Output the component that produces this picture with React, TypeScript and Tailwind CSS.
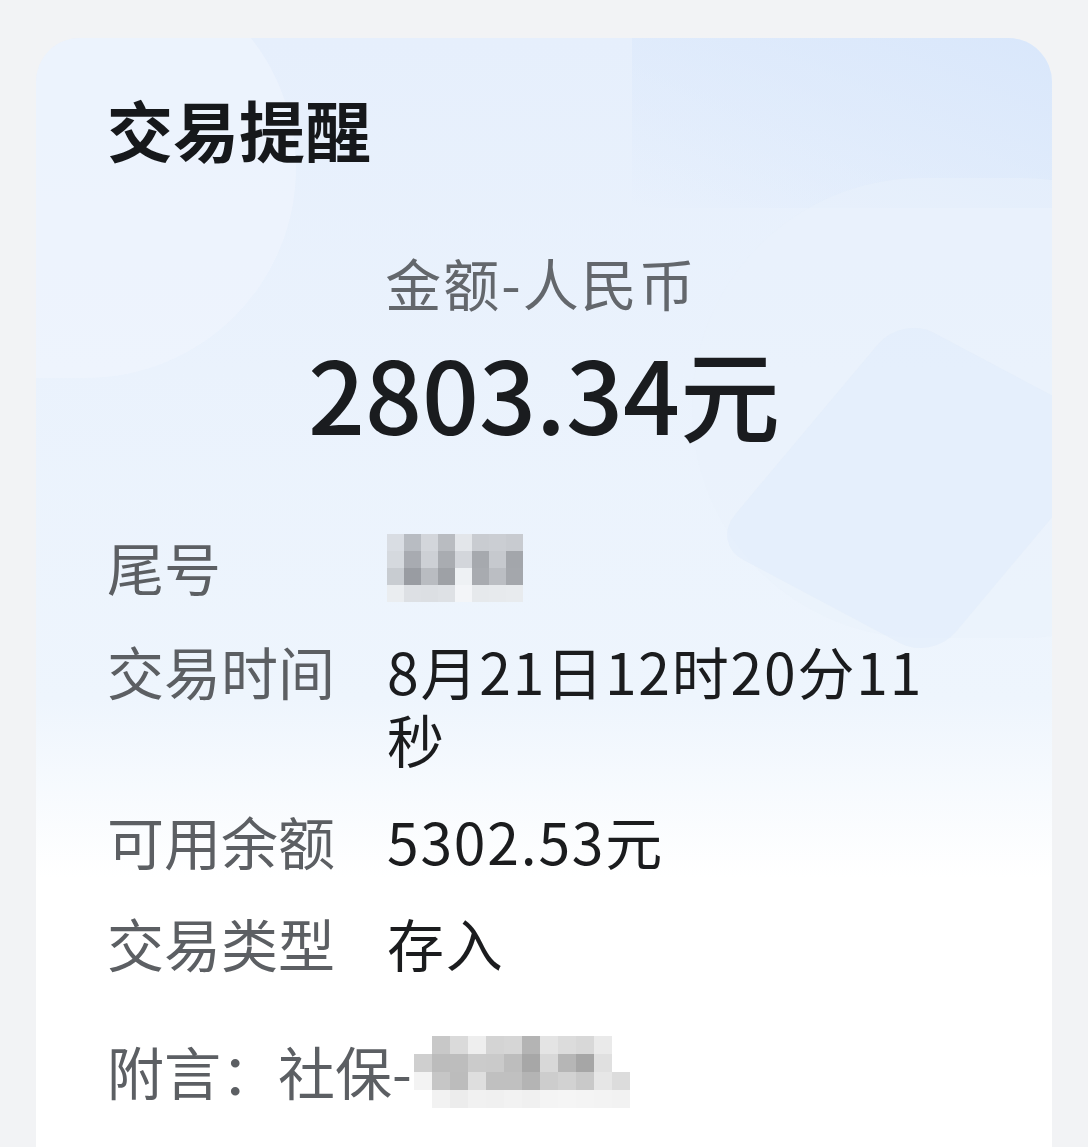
import React from 'react';

const FONT = '"Noto Sans CJK SC", "Noto Sans", sans-serif';

// pixelated mosaic used to hide sensitive text
const Mosaic: React.FC<{ cells: string[][]; size: number; className?: string }> = ({ cells, size, className }) => (
  <div className={`flex flex-col ${className ?? ''}`}>
    {cells.map((row, i) => (
      <div key={i} className="flex">
        {row.map((c, j) => (
          <div key={j} style={{ width: size, height: size, background: c }} />
        ))}
      </div>
    ))}
  </div>
);

const tailCells = [
  ['#d9dde3', '#b8bcc2', '#d3d6db', '#b9bcc1', '#e3e6ea', '#c9ccd1', '#cbced3', '#c8cbd0'],
  ['#d5d9de', '#a8abb1', '#cdd0d5', '#a9acb1', '#d3d6db', '#a6a9ae', '#c6c9ce', '#a3a6ab'],
  ['#c8ccd1', '#999ca2', '#b9bcc1', '#9ea1a6', '#eef1f4', '#a8abb0', '#bbbec3', '#a4a7ac'],
  ['#eaedf0', '#dde0e4', '#dcdfe3', '#dee1e5', '#f3f5f8', '#e6e9ec', '#e7eaed', '#e8ebee'],
];

const noteCells = [
  ['#ffffff', '#c8c8c8', '#dadada', '#eeeeee', '#d4d4d4', '#d6d6d6', '#b4b4b4', '#e4e4e4', '#dcdcdc', '#d8d8d8', '#eaeaea', '#ffffff'],
  ['#cfcfcf', '#bcbcbc', '#bdbdbd', '#cbcbcb', '#cacaca', '#bdbdbd', '#a7a7a7', '#d8d8d8', '#b6b6b6', '#a6a6a6', '#e0e0e0', '#ffffff'],
  ['#f3f3f3', '#c6c6c6', '#bcbcbc', '#dedede', '#c0c0c0', '#c0c0c0', '#b4b4b4', '#cdcdcd', '#d2d2d2', '#c9c9c9', '#e6e6e6', '#dcdcdc'],
  ['#ffffff', '#f2f2f2', '#ececec', '#f1f1f1', '#f0f0f0', '#f2f2f2', '#f0f0f0', '#f4f4f4', '#f5f5f5', '#f4f4f4', '#f3f3f3', '#f2f2f2'],
];

const Row: React.FC<{ label: string; children: React.ReactNode }> = ({ label, children }) => (
  <div className="flex items-start">
    <div className="w-[280px] shrink-0 text-[57px] leading-[68px] text-[#5c5f63]">{label}</div>
    <div className="w-[570px] text-[57px] leading-[68px] tracking-[1.8px] text-[#1b1c1e]">{children}</div>
  </div>
);

export default function App() {
  return (
    <div className="min-h-[1147px] bg-[#f2f3f5] pt-[38px] px-[36px] overflow-hidden" style={{ fontFamily: FONT }}>
      <div className="relative h-[1200px] rounded-[44px] overflow-hidden bg-gradient-to-b from-[#e6effc] via-[#eef5fd] via-55% to-white to-70%">
        {/* decorative background shapes */}
        <div className="absolute -left-[260px] -top-[80px] w-[520px] h-[420px] rounded-full bg-[#f0f5fd]/60" />
        <div className="absolute right-0 top-0 w-[420px] h-[170px] bg-gradient-to-bl from-[#d9e7fb] to-transparent" />
        <div className="absolute -right-[200px] top-[140px] w-[560px] h-[460px] rounded-full bg-[#e9f1fc]/50" />
        <div className="absolute right-[10px] top-[305px] w-[250px] h-[290px] rounded-[36px] bg-[#e0ebfb]/50 rotate-[28deg] skew-x-[-12deg]" />

        <div className="relative px-[71px] pt-[50px]">
          <div className="text-[66px] leading-[80px] font-semibold text-[#16181b]">交易提醒</div>

          <div className="mt-[82px] flex flex-col items-center">
            <div className="text-[56px] leading-[64px] tracking-[2px] text-[#63676c] pr-[6px]">金额-人民币</div>
            <div className="mt-[22px] text-[100px] leading-[112px] font-medium text-[#1a1c1f]">2803.34元</div>
          </div>

          <div className="mt-[84px] flex flex-col gap-[34px]">
            <Row label="尾号">
              <Mosaic cells={tailCells} size={17} className="mt-[2px]" />
            </Row>
            <Row label="交易时间">8月21日12时20分11秒</Row>
            <Row label="可用余额">5302.53元</Row>
            <Row label="交易类型">存入</Row>
          </div>

          <div className="mt-[56px] flex items-center text-[57px] leading-[68px] text-[#5c5f63]">
            <span>附言：社保-</span>
            <Mosaic cells={noteCells} size={18} className="ml-[2px] mt-[4px]" />
          </div>
        </div>
      </div>
    </div>
  );
}
